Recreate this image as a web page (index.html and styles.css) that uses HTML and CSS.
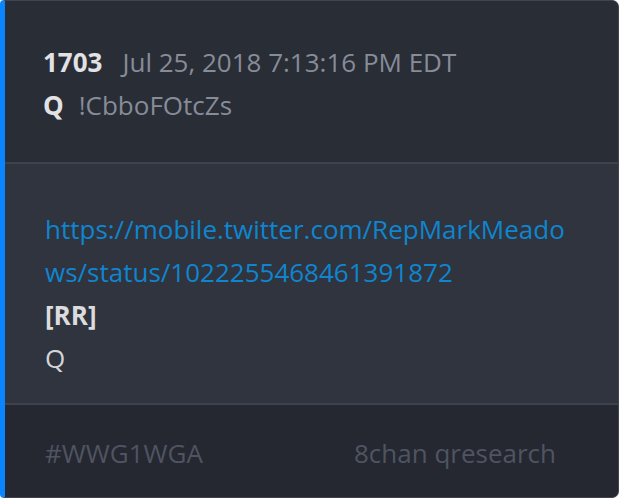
FILE: index.html
```html
<!DOCTYPE html>
<html>
<head>
<meta charset="utf-8">
<link rel="stylesheet" href="styles.css">
</head>
<body>
<article class="post">
  <header class="post-head">
    <div class="line"><span class="num">1703</span><span class="date">Jul 25, 2018 7:13:16 PM EDT</span></div>
    <div class="line"><span class="author">Q</span><span class="trip">!CbboFOtcZs</span></div>
  </header>
  <section class="post-body">
    <a class="link" href="#">https://mobile.twitter.com/RepMarkMeadows/status/1022255468461391872</a>
    <div class="strong">[RR]</div>
    <div class="text">Q</div>
  </section>
  <footer class="post-foot">
    <span>#WWG1WGA</span>
    <span>8chan qresearch</span>
  </footer>
</article>
</body>
</html>
```
FILE: styles.css
```css
html, body {
  margin: 0;
  padding: 0;
  background: #ffffff;
}
body {
  font-family: "Open Sans", "Noto Sans", sans-serif;
  font-size: 26px;
  line-height: 43px;
}
.post {
  box-sizing: border-box;
  width: 619px;
  height: 498px;
  border: 1px solid #3f444e;
  border-left: 5px solid #0a84ff;
  border-radius: 4px 7px 7px 4px;
  overflow: hidden;
  display: flex;
  flex-direction: column;
  background: #2f343e;
}
.post-head {
  background: #292d36;
  padding: 40px 40px 35px 38px;
  border-bottom: 2px solid #3d424c;
}
.line {
  display: flex;
  align-items: baseline;
}
.num {
  font-weight: 700;
  color: #e2e2e4;
  margin-right: 20px;
}
.date {
  color: #878c98;
}
.author {
  font-weight: 700;
  color: #e2e2e4;
  margin-right: 15px;
}
.trip {
  color: #878c98;
}
.post-body {
  flex: 1;
  background: #2f343e;
  padding: 44px 48px 20px 40px;
  border-bottom: 2px solid #3d424c;
}
.link {
  display: block;
  color: #0f85cf;
  text-decoration: none;
  word-break: break-all;
}
.strong {
  font-weight: 700;
  color: #dcdcde;
}
.text {
  color: #d4d5d8;
}
.post-foot {
  background: #252830;
  padding: 27px 62px 22px 40px;
  display: flex;
  justify-content: space-between;
  color: #4f5462;
}
```
